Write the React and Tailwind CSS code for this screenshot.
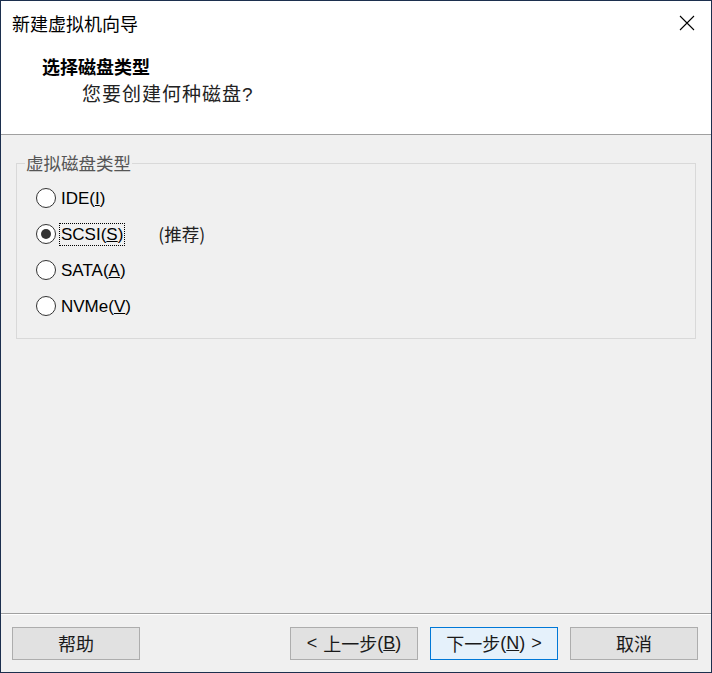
import React from 'react';

const cjk = { fontFamily: '"Noto Sans CJK SC", "Noto Sans", sans-serif' };
const latin = { fontFamily: '"Liberation Sans", "Noto Sans CJK SC", sans-serif' };

function Radio({ checked, label, mnemonic, focused, extra }) {
  const idx = label.indexOf('(' + mnemonic + ')');
  const before = label.slice(0, idx + 1);
  const after = label.slice(idx + 2);
  return (
    <div className="flex items-center h-[36px] ml-[11px]">
      <span className="w-[20px] h-[20px] rounded-full border border-[#333333] bg-white flex items-center justify-center shrink-0">
        {checked && <span className="w-[10px] h-[10px] rounded-full bg-[#333333]" />}
      </span>
      <span
        className={
          'ml-[4px] px-[1px] text-[17px] leading-[21px] text-black ' +
          (focused ? 'outline outline-1 outline-dotted outline-black' : '')
        }
        style={latin}
      >
        {before}
        <span className="underline underline-offset-1">{mnemonic}</span>
        {after}
      </span>
      {extra && (
        <span className="ml-[34px] text-[17.5px] text-[#222222]" style={cjk}>
          {extra}
        </span>
      )}
    </div>
  );
}

function Btn({ children, primary }) {
  return (
    <button
      className={
        'w-[128px] h-[33px] border flex items-center justify-center text-[18px] text-[#1a1a1a] ' +
        (primary ? 'bg-[#e5f1fb] border-[#0078d7]' : 'bg-[#e1e1e1] border-[#adadad]')
      }
      style={cjk}
    >
      {children}
    </button>
  );
}

export default function App() {
  return (
    <div className="w-[712px] h-[673px] border border-[#1c2f4e] flex flex-col bg-[#f0f0f0]" style={cjk}>
      {/* header */}
      <div className="h-[134px] bg-white border-b border-[#a0a0a0] flex flex-col shrink-0">
        <div className="h-[44px] flex items-center justify-between pl-[11px] pr-[16px]">
          <span className="text-[18px] text-black">新建虚拟机向导</span>
          <svg width="16" height="16" viewBox="0 0 16 16">
            <path d="M1 1 L15 15 M15 1 L1 15" stroke="#000" strokeWidth="1.1" fill="none" />
          </svg>
        </div>
        <div className="pl-[41px] mt-[9px] text-[18px] font-bold leading-[24px] text-black">选择磁盘类型</div>
        <div className="pl-[81px] mt-[3px] text-[19px] leading-[24px] text-[#222222] tracking-[1px]">
          您要创建何种磁盘<span style={latin}>?</span>
        </div>
      </div>

      {/* body */}
      <div className="flex-1 px-[15px]">
        <fieldset className="mt-[16px] w-[680px] h-[188px] border border-[#d9d9d9] px-[8px] pb-[14px]">
          <legend className="px-[1px] text-[17.5px] leading-[24px] text-[#555555]">虚拟磁盘类型</legend>
          <div className="pt-[5px] flex flex-col">
            <Radio label="IDE(I)" mnemonic="I" />
            <Radio label="SCSI(S)" mnemonic="S" checked focused extra="(推荐)" />
            <Radio label="SATA(A)" mnemonic="A" />
            <Radio label="NVMe(V)" mnemonic="V" />
          </div>
        </fieldset>
      </div>

      {/* footer */}
      <div className="border-t border-[#a0a0a0] shrink-0">
        <div className="border-t border-white flex items-center justify-between pl-[11px] pr-[13px] pt-[12px] pb-[12px]">
          <Btn>帮助</Btn>
          <div className="flex gap-[12px]">
            <Btn>
              <span style={latin}>&lt;</span>
              <span className="ml-[6px]">上一步</span>
              <span style={latin}>
                (<span className="underline underline-offset-1">B</span>)
              </span>
            </Btn>
            <Btn primary>
              <span>下一步</span>
              <span style={latin}>
                (<span className="underline underline-offset-1">N</span>)
              </span>
              <span className="ml-[6px]" style={latin}>&gt;</span>
            </Btn>
            <Btn>取消</Btn>
          </div>
        </div>
      </div>
    </div>
  );
}
